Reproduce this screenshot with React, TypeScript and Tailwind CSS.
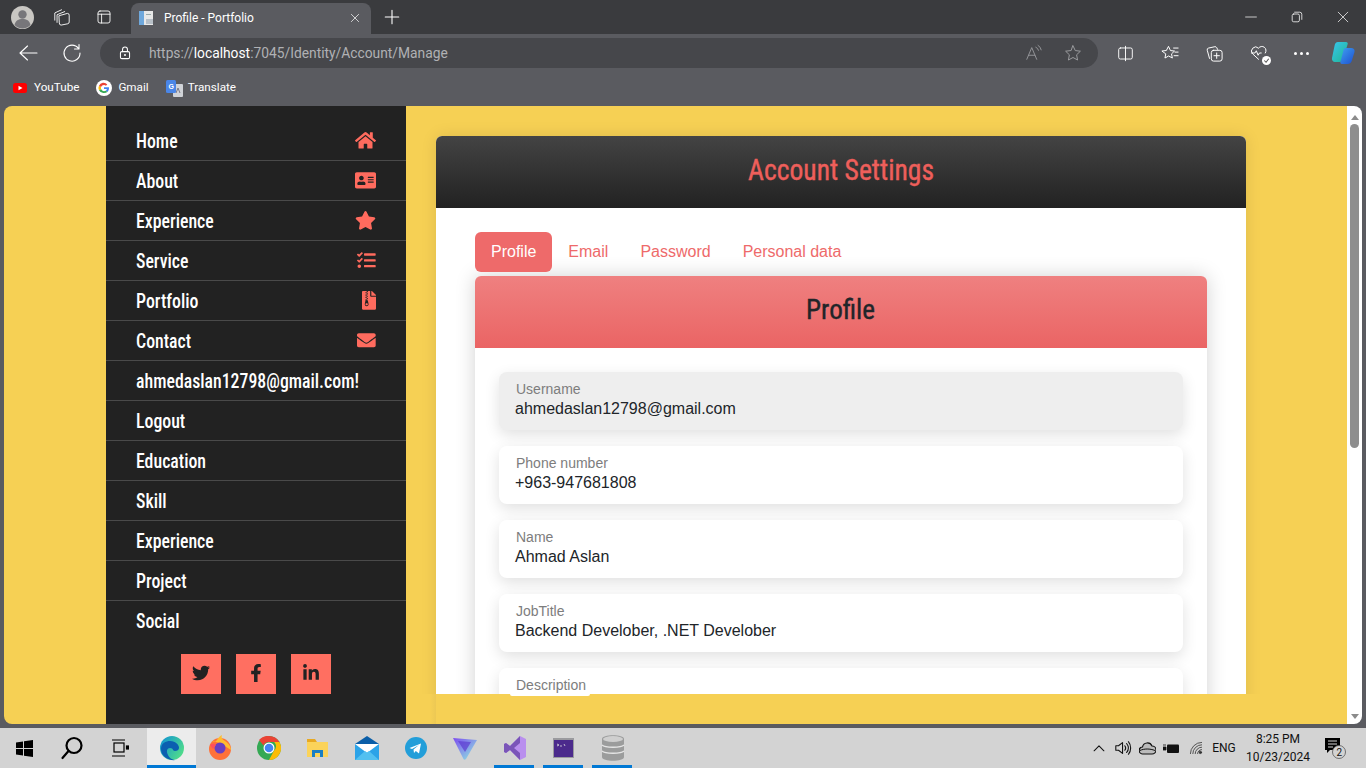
import React from "react";
import { FaHome, FaAddressCard, FaStar, FaTasks, FaFileArchive, FaEnvelope, FaTwitter, FaFacebookF, FaLinkedinIn } from "react-icons/fa";

const narrow = "font-['Liberation_Sans_Narrow','Roboto_Condensed','Liberation_Sans',sans-serif]";
const ui = "font-['Roboto','Liberation_Sans',sans-serif]";
const arial = "font-['Liberation_Sans',Arial,sans-serif]";

const navItems: [string, React.ReactNode][] = [
  ["Home", <FaHome className="w-[21px] h-[18.7px]" />],
  ["About", <FaAddressCard className="w-[21px] h-[18.7px]" />],
  ["Experience", <FaStar className="w-[21px] h-[18.7px]" />],
  ["Service", <FaTasks className="w-[18.7px] h-[18.7px]" />],
  ["Portfolio", <FaFileArchive className="w-[14px] h-[18.7px]" />],
  ["Contact", <FaEnvelope className="w-[18.7px] h-[18.7px]" />],
  ["ahmedaslan12798@gmail.com!", null],
  ["Logout", null],
  ["Education", null],
  ["Skill", null],
  ["Experience", null],
  ["Project", null],
  ["Social", null],
];

const fields: [string, string, boolean][] = [
  ["Username", "ahmedaslan12798@gmail.com", true],
  ["Phone number", "+963-947681808", false],
  ["Name", "Ahmad Aslan", false],
  ["JobTitle", "Backend Develober, .NET Develober", false],
];

function Stroke({ size = 20, children, sw = 1.2, color = "#fff" }: { size?: number; children: React.ReactNode; sw?: number; color?: string }) {
  return (
    <svg width={size} height={size} viewBox="0 0 20 20" fill="none" stroke={color} strokeWidth={sw} strokeLinecap="round" strokeLinejoin="round">
      {children}
    </svg>
  );
}

function TabStrip() {
  return (
    <div className="h-[34px] bg-[#3a3b3e] flex items-end shrink-0">
      <div className="w-[44px] h-[34px] flex items-center justify-center">
        <svg width="23" height="23" viewBox="0 0 23 23">
          <circle cx="11.5" cy="11.5" r="11.5" fill="#c9c7c3" />
          <circle cx="11.5" cy="8.5" r="4.2" fill="#77767a" />
          <path d="M3.5 19c1-4.500 4-6 8-6s7 1.500 8 6a11 11 0 0 1-16 0z" fill="#77767a" />
        </svg>
      </div>
      <div className="w-[36px] h-[34px] flex items-center justify-center">
        <Stroke size={18} sw={1}>
          <path d="M7 8.500l9-2.500a2 2 0 0 1 2 2v7.500a2 2 0 0 1-1.500 2L9 19a2 2 0 0 1-2-2z" />
          <path d="M4.500 16V7.500L13 4M2 13.500V5.500L9.500 2" />
        </Stroke>
      </div>
      <div className="w-[48px] h-[34px] flex items-center justify-center">
        <Stroke size={16} sw={1.1}>
          <rect x="2.500" y="2.500" width="15" height="15" rx="2.500" />
          <path d="M2.500 6.500h15M7 6.500v11" />
        </Stroke>
      </div>
      <div className="ml-[3px] w-[240px] h-[31px] rounded-t-lg bg-[#5a5b60] flex items-center pl-[8px] pr-[10px] pb-[2px]">
        <svg width="16" height="16" viewBox="0 0 16 16">
          <rect x="0" y="1" width="6" height="14" fill="#6fa8dc" />
          <rect x="5" y="1" width="9" height="14" fill="#e8e8e8" />
          <rect x="7" y="9" width="7" height="5" fill="#b8c0c8" />
          <rect x="7" y="4" width="5" height="1" fill="#9aa" />
        </svg>
        <span className={`ml-[9px] flex-1 text-[12px] text-white ${ui}`}>Profile - Portfolio</span>
        <Stroke size={12} sw={1.2}>
          <path d="M4 4l12 12M16 4L4 16" />
        </Stroke>
      </div>
      <div className="w-[42px] h-[34px] flex items-center justify-center">
        <Stroke size={18} sw={1.2}>
          <path d="M10 2.500v15M2.500 10h15" />
        </Stroke>
      </div>
      <div className="flex-1" />
      <div className="flex h-[34px] items-center">
        <div className="w-[46px] flex justify-center"><Stroke size={12}><path d="M1 10h18" /></Stroke></div>
        <div className="w-[46px] flex justify-center">
          <Stroke size={12} sw={1.3}><rect x="2" y="5" width="12" height="13" rx="2.500" /><path d="M6 2h8.500A3.500 3.500 0 0 1 18 5.500V14" /></Stroke>
        </div>
        <div className="w-[46px] flex justify-center"><Stroke size={12} sw={1.2}><path d="M2 2l16 16M18 2L2 18" /></Stroke></div>
      </div>
    </div>
  );
}

function Toolbar() {
  return (
    <div className="h-[38px] bg-[#5a5b60] flex items-center shrink-0">
      <div className="w-[56px] flex justify-center">
        <Stroke size={20} sw={1.1}><path d="M2 10h17M9.500 3L2 10l7.500 7" /></Stroke>
      </div>
      <div className="w-[32px] flex justify-center">
        <Stroke size={20} sw={1.1}><path d="M16.500 5.500A8 8 0 1 0 18 10M17 1.500v4.500h-4.500" /></Stroke>
      </div>
      <div className="ml-[12px] w-[998px] h-[30px] rounded-full bg-[#46474b] flex items-center pl-[18px] pr-[16px]">
        <Stroke size={14} sw={1.5}>
          <rect x="3.500" y="8" width="13" height="10" rx="2" />
          <path d="M6.500 8V5a3.500 3.500 0 0 1 7 0v3" />
          <circle cx="10" cy="13" r="0.700" />
        </Stroke>
        <span className={`ml-[17px] flex-1 text-[13.8px] text-[#b0b1b4] ${ui}`}>
          https://<span className="text-white">localhost</span>:7045/Identity/Account/Manage
        </span>
        <Stroke size={18} sw={1} color="#9a9b9e">
          <path d="M2 17L7.500 4 13 17M4 12.500h7M12 3.500a5 5 0 0 1 3 3.500M14.500 1.500a7 7 0 0 1 3.500 5" />
        </Stroke>
        <div className="ml-[21px]">
          <Stroke size={18} sw={1.1} color="#9a9b9e"><path d="M10 2l2.500 5.300 5.700.700-4.200 4 1.100 5.800L10 15l-5.100 2.800L6 12 1.800 8l5.700-.700z" /></Stroke>
        </div>
      </div>
      <div className="ml-[18px] w-[18px] flex justify-center">
        <Stroke size={17} sw={1.1}><rect x="2" y="3.500" width="16" height="13" rx="2" /><path d="M10 1.500v17" /></Stroke>
      </div>
      <div className="ml-[27px]">
        <Stroke size={18} sw={1.1}><path d="M8.500 3l2 4.300 4.500.500-3.300 3.200.9 4.600-4.100-2.300-4.100 2.300.9-4.600L1 7.800l4.500-.500zM14 4.500h5M15.500 9H19M14.500 13H19" /></Stroke>
      </div>
      <div className="ml-[26px]">
        <Stroke size={18} sw={1.1}><path d="M5 16L2.500 7a2 2 0 0 1 1.500-2.500L11 3a2 2 0 0 1 2 1l1 2" /><rect x="7" y="7" width="12" height="12" rx="2.500" /><path d="M13 10v6M10 13h6" /></Stroke>
      </div>
      <div className="ml-[27px] relative">
        <Stroke size={18} sw={1.1}><path d="M9.500 17L3 11a4.500 4.500 0 0 1 6.500-6.300A4.500 4.500 0 0 1 17 10M1.500 10h4l1.500-2.500 2 5 1.500-2.500h2" /></Stroke>
        <span className="absolute right-[-3px] bottom-[-3px] w-[9px] h-[9px] rounded-full bg-white flex items-center justify-center">
          <svg width="7" height="7" viewBox="0 0 8 8"><path d="M1.500 4l2 2 3-4" stroke="#555" fill="none" strokeWidth="1.200" /></svg>
        </span>
      </div>
      <div className="ml-[26px] flex gap-[3px]">
        <span className="w-[3px] h-[3px] rounded-full bg-white" />
        <span className="w-[3px] h-[3px] rounded-full bg-white" />
        <span className="w-[3px] h-[3px] rounded-full bg-white" />
      </div>
      <div className="ml-[21px]">
        <svg width="26" height="26" viewBox="0 0 26 26">
          <defs>
            <linearGradient id="c1" x1="0" y1="0" x2="1" y2="1"><stop offset="0" stopColor="#38c6f0" /><stop offset="1" stopColor="#1fb58f" /></linearGradient>
            <linearGradient id="c2" x1="0" y1="0" x2="1" y2="1"><stop offset="0" stopColor="#3fa0f0" /><stop offset="1" stopColor="#1d4fd0" /></linearGradient>
          </defs>
          <path d="M8 2h8c1.500 0 2 1 1.700 2L13 19c-.5 1.500-1.500 3-3.500 3H5c-2 0-3.500-2-3-4L4.500 6C5 3.500 6 2 8 2z" fill="url(#c1)" />
          <path d="M16 8h5c2.500 0 4 1.500 3.500 4L22 20c-.6 2.500-2 4-4.500 4H12c-1.500 0-2-1-1.500-2.500L13 12c.5-2.500 1-4 3-4z" fill="url(#c2)" />
        </svg>
      </div>
    </div>
  );
}

function Bookmarks() {
  return (
    <div className={`h-[34px] bg-[#5a5b60] flex items-center pl-[13px] pb-[2px] text-[11.7px] text-white shrink-0 ${ui}`}>
      <svg width="14" height="10" viewBox="0 0 14 10"><rect width="14" height="10" rx="2.500" fill="#f00" /><path d="M5.500 2.800v4.400L9.500 5z" fill="#fff" /></svg>
      <span className="ml-[7px]">YouTube</span>
      <svg className="ml-[17px]" width="16" height="16" viewBox="0 0 16 16">
        <circle cx="8" cy="8" r="8" fill="#fff" />
        <path d="M13 8.200c0-.4 0-.7-.1-1H8v1.900h2.800a2.400 2.400 0 0 1-1 1.600l1.600 1.200c1-.9 1.600-2.200 1.600-3.700z" fill="#4285f4" />
        <path d="M8 13c1.400 0 2.500-.4 3.400-1.100l-1.600-1.200c-.5.300-1 .5-1.800.5-1.300 0-2.500-.9-2.900-2.100L3 10.300A5 5 0 0 0 8 13z" fill="#34a853" />
        <path d="M5.100 9.100a3 3 0 0 1 0-2.200L3 5.700a5 5 0 0 0 0 4.600z" fill="#fbbc05" />
        <path d="M8 5c.8 0 1.400.3 1.900.8l1.400-1.400A5 5 0 0 0 3 5.700l2.100 1.200C5.500 5.800 6.700 5 8 5z" fill="#ea4335" />
      </svg>
      <span className="ml-[6px]">Gmail</span>
      <svg className="ml-[17px]" width="17" height="17" viewBox="0 0 17 17">
        <rect x="7" y="4" width="10" height="13" rx="1" fill="#d0d3d8" />
        <path d="M12 8l-2 5M12 8l2 5" stroke="#778" strokeWidth="1" />
        <rect x="0" y="0" width="10" height="13" rx="1.500" fill="#4a86e8" />
        <text x="2.500" y="9" fontSize="7" fill="#fff" fontFamily="Liberation Sans" fontWeight="700">G</text>
      </svg>
      <span className="ml-[5px]">Translate</span>
    </div>
  );
}

function Sidebar() {
  return (
    <aside className={`w-[300px] h-full bg-[#222222] pt-[15px] shrink-0 ${narrow}`}>
      {navItems.map(([label, icon], i) => (
        <div
          key={i}
          className={`h-[40px] flex items-center justify-between pl-[30px] pr-[30px] text-white text-[20px] font-medium whitespace-nowrap ${i < navItems.length - 1 ? "border-b border-[#4a4a4a]" : ""}`}
        >
          <span className="inline-block origin-left scale-x-[0.89]">{label}</span>
          <span className="text-[#ff6b5e]">{icon}</span>
        </div>
      ))}
      <div className="flex justify-center gap-[15px] mt-[13px]">
        <div className="w-[40px] h-[40px] bg-[#ff6f61] flex items-center justify-center text-[#222]"><FaTwitter className="w-[18px] h-[18px] mb-[3px]" /></div>
        <div className="w-[40px] h-[40px] bg-[#ff6f61] flex items-center justify-center text-[#222]"><FaFacebookF className="w-[18px] h-[18px] mb-[3px]" /></div>
        <div className="w-[40px] h-[40px] bg-[#ff6f61] flex items-center justify-center text-[#222]"><FaLinkedinIn className="w-[18px] h-[18px] mb-[3px]" /></div>
      </div>
    </aside>
  );
}

function Field({ label, value, disabled }: { label: string; value: string; disabled?: boolean }) {
  return (
    <div className={`h-[58px] rounded-lg px-[16px] pt-[9px] shadow-[0_5px_15px_rgba(0,0,0,0.12)] ${disabled ? "bg-[#eeeeee]" : "bg-white"} ${arial}`}>
      <div className="text-[14px] leading-[16px] text-[#7d7d7d] pl-[1px]">{label}</div>
      <div className="text-[16px] leading-[20px] mt-[2px] text-[#212529]">{value}</div>
    </div>
  );
}

function Main() {
  return (
    <main className="flex-1 min-w-0 flex flex-col">
      <div className="h-[588px] overflow-hidden pt-[30px] pl-[30px] pr-[101px]">
        <div className="rounded-t-md shadow-[0_0_16px_rgba(0,0,0,0.1)] bg-white">
          <div className={`h-[72px] pb-[6px] rounded-t-md bg-gradient-to-b from-[#444444] to-[#222222] flex items-center justify-center text-[#ee5f5b] text-[30px] [-webkit-text-stroke:0.4px_#ee5f5b] ${narrow}`}>
            <span className="inline-block scale-x-[0.92]">Account Settings</span>
          </div>
          <div className="px-[39px] pt-[24px]">
            <div className={`flex h-[40px] text-[16px] text-[#ee6a6a] ${arial}`}>
              <div className="px-[16px] leading-[40px] rounded-md bg-[#ee6a6a] text-white">Profile</div>
              <div className="px-[16px] leading-[40px]">Email</div>
              <div className="px-[16px] leading-[40px]">Password</div>
              <div className="px-[16px] leading-[40px]">Personal data</div>
            </div>
            <div className="mt-[4px] rounded-t-md shadow-[0_0_20px_rgba(0,0,0,0.18)]">
              <div className={`h-[72px] pb-[4px] rounded-t-md bg-gradient-to-b from-[#ef8080] to-[#ea6464] flex items-center justify-center text-[#212529] text-[28px] [-webkit-text-stroke:0.4px_#212529] ${narrow}`}>
                <span className="inline-block scale-x-[0.97]">Profile</span>
              </div>
              <div className="px-[24px] pt-[24px] flex flex-col gap-[16px] bg-white">
                {fields.map(([l, v, d]) => (
                  <Field key={l} label={l} value={v} disabled={d} />
                ))}
                <Field label="Description" value="" />
              </div>
            </div>
          </div>
        </div>
      </div>
      <div className="flex-1 flex items-start pl-[24px]">
        <div className="w-[6px] h-full bg-gradient-to-r from-[#f6d054] to-[#ecc854]" />
        <div className="ml-[74px] w-[80px] h-[2px] bg-white rounded-b" />
      </div>
    </main>
  );
}

function Scrollbar() {
  return (
    <div className="w-[15px] bg-white flex flex-col items-start pl-[3px] shrink-0">
      <div className="mt-[9px] ml-[0.5px] w-0 h-0 border-x-[4px] border-x-transparent border-b-[5px] border-b-[#8b8b8b]" />
      <div className="mt-[4px] w-[9px] h-[324px] rounded-full bg-[#8e8e8e]" />
      <div className="flex-1" />
      <div className="mb-[5px] ml-[0.5px] w-0 h-0 border-x-[4px] border-x-transparent border-t-[5px] border-t-[#8b8b8b]" />
    </div>
  );
}

function Taskbar() {
  const cell = "w-[49px] h-[40px] flex items-center justify-center relative";
  const line = <span className="absolute bottom-0 left-[4px] right-[5px] h-[3px] bg-[#0078d4]" />;
  return (
    <div className="h-[40px] bg-[#d3d3d3] flex items-center shrink-0">
      <div className={cell}>
        <svg width="17" height="17" viewBox="0 0 17 17" fill="#000"><path d="M0 2.500L7 1.500V8H0zM8 1.300L17 0v8H8zM0 9h7v6.500L0 14.500zM8 9h9v8l-9-1.300z" /></svg>
      </div>
      <div className={`${cell} pr-[3px]`}>
        <svg width="24" height="24" viewBox="0 0 24 24" fill="none" stroke="#000" strokeWidth="2.200" strokeLinecap="round"><circle cx="14" cy="9.500" r="7.500" /><path d="M8.500 15L2.500 22" /></svg>
      </div>
      <div className={`${cell} pr-[5px]`}>
        <svg width="18" height="18" viewBox="0 0 18 18" fill="none" stroke="#000" strokeWidth="1.200"><rect x="3" y="4" width="10" height="9" /><path d="M1 1h13M1 17h13" /><rect x="15.500" y="7" width="2" height="3" fill="#000" /></svg>
      </div>
      <div className={`${cell} bg-[#ececec]`}>
        <svg width="26" height="26" viewBox="0 0 26 26">
          <defs>
            <linearGradient id="e1" x1="0" y1="0" x2="1" y2="0.600"><stop offset="0" stopColor="#0c8fd6" /><stop offset="1" stopColor="#4fdb8c" /></linearGradient>
          </defs>
          <circle cx="13" cy="13" r="12" fill="url(#e1)" />
          <path d="M2 14C2 8 7 6 11 6c6 0 9 4 9 7 0 2-2 3-4 3-3 0-1-3-5-3-3 0-4 3-2 7 1 3 5 5 8 5-8 1-15-4-15-11z" fill="#0b5fb0" />
        </svg>
        <span className="absolute bottom-0 left-0 right-0 h-[3px] bg-[#0078d4]" />
      </div>
      <div className={`${cell} pr-[2px]`}>
        <svg width="24" height="26" viewBox="0 0 24 26">
          <circle cx="12" cy="14" r="11" fill="#ff7139" />
          <path d="M4 6c1 1 2 1 3 1 2-1 3-5 7-7-1 3 0 4 3 6 3 2 6 5 6 9L12 8z" fill="#ffbd2e" />
          <circle cx="12" cy="13" r="5.500" fill="#6a3fc0" />
          <path d="M2 10c2-2 4-2 6 0l-3 4z" fill="#ff4f5e" />
        </svg>
      </div>
      <div className={`${cell} pr-[2px]`}>
        <svg width="24" height="24" viewBox="0 0 24 24">
          <circle cx="12" cy="12" r="12" fill="#34a853" />
          <path d="M12 0a12 12 0 0 1 10.400 6H12a6 6 0 0 0-5.500 3.500L2 4a12 12 0 0 1 10-4z" fill="#ea4335" />
          <path d="M22.400 6A12 12 0 0 1 12 24l4.800-9A6 6 0 0 0 17.200 6z" fill="#fbbc05" />
          <circle cx="12" cy="12" r="5.500" fill="#fff" />
          <circle cx="12" cy="12" r="4.300" fill="#4285f4" />
        </svg>
      </div>
      <div className={`${cell} pr-[2px]`}>
        <svg width="22" height="20" viewBox="0 0 22 20">
          <path d="M0 1h8l2 3h-10z" fill="#e8a922" />
          <rect x="0" y="4" width="21" height="15" fill="#fbd35a" />
          <path d="M5 19v-7h11v7h-3v-4H8v4z" fill="#1a7fc4" />
        </svg>
      </div>
      <div className={`${cell} pr-[2px]`}>
        <svg width="24" height="26" viewBox="0 0 24 26">
          <path d="M0 9L12 1l12 8v3H0z" fill="#0a5ea8" />
          <rect x="0" y="9" width="24" height="16" fill="#2ba3e8" />
          <path d="M0 9l12 9 12-9z" fill="#ffffff" />
          <path d="M0 25l10-9 2 1.500 2-1.500 10 9z" fill="#52c0f0" />
        </svg>
      </div>
      <div className={`${cell} pr-[2px]`}>
        <svg width="22" height="22" viewBox="0 0 22 22">
          <circle cx="11" cy="11" r="11" fill="#229ed9" />
          <path d="M4.500 11L16 6.500 14 16.500 10.800 14 9 16l-.5-3.500L14 8l-7 4z" fill="#fff" />
        </svg>
      </div>
      <div className={`${cell} pr-[2px]`}>
        <svg width="24" height="26" viewBox="0 0 24 26">
          <defs>
            <linearGradient id="p1" x1="0" y1="0" x2="1" y2="1"><stop offset="0" stopColor="#7d4cf0" /><stop offset="1" stopColor="#8ff0e0" /></linearGradient>
          </defs>
          <path d="M0 3l24 2-11 19c-1 1-2 1-2.500 0z" fill="url(#p1)" />
          <path d="M5 6l13 1-6 10z" fill="#5b3bd0" opacity="0.700" />
        </svg>
      </div>
      <div className={cell}>
        <svg width="24" height="26" viewBox="0 0 24 26">
          <path d="M17 1l6 3v18l-6 3L7 15l-4 3-2-1V9l2-1 4 3z" fill="#b98fee" />
          <path d="M17 1L7 11 3 8 1 9v8l2 1 4-3 10 10V18l-6-5 6-5z" fill="#7a55b8" />
        </svg>
        {line}
      </div>
      <div className={cell}>
        <svg width="21" height="20" viewBox="0 0 21 20">
          <rect width="21" height="20" fill="#9a9a9e" />
          <rect x="1" y="2" width="19" height="17" fill="#4b2a8c" />
          <path d="M4 6l2 1-2 1M7 8h2M11 6l1 2" stroke="#ddd" strokeWidth="0.800" fill="none" />
        </svg>
        {line}
      </div>
      <div className={cell}>
        <svg width="24" height="26" viewBox="0 0 24 26">
          <path d="M1 4c0-5 22-5 22 0v18c0 5-22 5-22 0z" fill="#9b9c9c" />
          <ellipse cx="12" cy="4" rx="10" ry="3" fill="#cfcfcf" />
          <path d="M1 10c3 3 19 3 22 0M1 16c3 3 19 3 22 0" stroke="#e5e5e5" strokeWidth="1.500" fill="none" />
        </svg>
        {line}
      </div>
      <div className="flex-1" />
      <div className={`flex items-center text-[#111] ${ui}`}>
        <div className="w-[24px] flex justify-center"><Stroke size={14} color="#111" sw={1.5}><path d="M3 14l7-7 7 7" /></Stroke></div>
        <div className="w-[24px] flex justify-center"><Stroke size={18} color="#111" sw={1.2}><path d="M2 7.500h3L9.500 4v12L5 12.500H2zM12 7.500a4 4 0 0 1 0 5M14 5a8 8 0 0 1 0 10M16 3a11 11 0 0 1 0 14" /></Stroke></div>
        <div className="w-[24px] flex justify-center">
          <svg width="17" height="13" viewBox="0 0 17 13"><path d="M4 12a3.500 3.500 0 0 1-.5-7A5 5 0 0 1 13 4a4 4 0 0 1 0 8z" fill="#bbb" stroke="#111" strokeWidth="1.200" /><path d="M1 8.500c4-2 10-2 15 0" stroke="#111" fill="none" /></svg>
        </div>
        <div className="w-[24px] flex justify-center">
          <svg width="16" height="11" viewBox="0 0 16 11" fill="#111"><rect x="4" y="1.500" width="12" height="8.500" rx="1" /><path d="M0 4h3v3H0zM2 1v2M0 1v2" stroke="#111" strokeWidth="0.800" /></svg>
        </div>
        <div className="w-[26px] flex justify-center">
          <Stroke size={16} color="#333" sw={1}><path d="M3 17a14 14 0 0 1 14-14M6 17a11 11 0 0 1 11-11M9 17a8 8 0 0 1 8-8M12 17a5 5 0 0 1 5-5" /><circle cx="15.500" cy="15.500" r="1.500" fill="#333" /></Stroke>
        </div>
        <div className="w-[30px] text-center text-[12px]">ENG</div>
        <div className="w-[78px] text-center text-[12px] leading-[18px]">
          <div>8:25 PM</div>
          <div>10/23/2024</div>
        </div>
        <div className="w-[49px] flex justify-start pl-[7px]">
          <svg width="24" height="22" viewBox="0 0 24 22">
            <path d="M1 1h15v12H6l-3 3v-3H1z" fill="#000" />
            <path d="M4 4h9M4 7h9M4 10h5" stroke="#d3d3d3" strokeWidth="1" />
            <circle cx="15" cy="15" r="6.500" fill="#d3d3d3" stroke="#555" strokeWidth="0.800" />
            <text x="12.500" y="18.500" fontSize="10" fill="#111" fontFamily="Roboto">2</text>
          </svg>
        </div>
      </div>
    </div>
  );
}

export default function App() {
  return (
    <div className="w-[1366px] h-[768px] overflow-hidden flex flex-col bg-[#5a5b60]">
      <TabStrip />
      <Toolbar />
      <Bookmarks />
      <div className="h-[618px] mx-[4px] rounded-lg overflow-hidden flex shrink-0">
        <div className="flex-1 min-w-0 bg-[#f6d054] flex pl-[102px]">
          <Sidebar />
          <Main />
        </div>
        <Scrollbar />
      </div>
      <div className="h-[4px] shrink-0" />
      <Taskbar />
    </div>
  );
}
